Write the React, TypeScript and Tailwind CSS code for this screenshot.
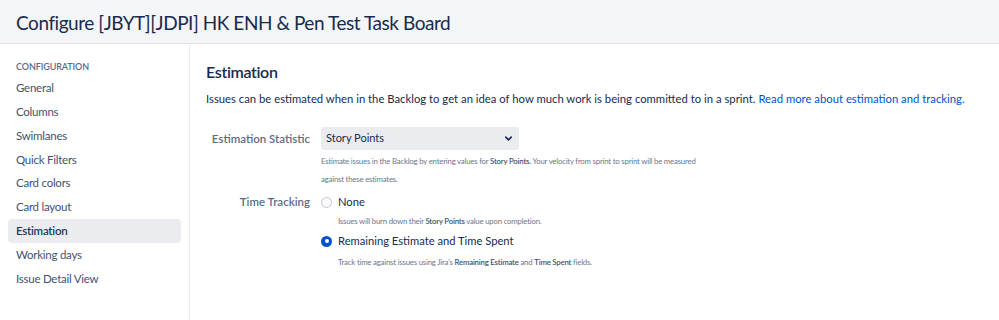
import React from 'react';

const navItems = [
  'General',
  'Columns',
  'Swimlanes',
  'Quick Filters',
  'Card colors',
  'Card layout',
  'Estimation',
  'Working days',
  'Issue Detail View',
];

const font = { fontFamily: 'Lato, "Noto Sans", sans-serif' };

function Radio({ checked }: { checked?: boolean }) {
  return checked ? (
    <span className="flex h-[11px] w-[11px] shrink-0 items-center justify-center rounded-full bg-[#0052cc]">
      <span className="h-[4px] w-[4px] rounded-full bg-white" />
    </span>
  ) : (
    <span className="h-[11px] w-[11px] shrink-0 rounded-full border border-[#c1c7d0] bg-[#fafbfc]" />
  );
}

export default function App() {
  return (
    <div className="h-[320px] w-[999px] overflow-hidden bg-white text-[#172b4d]" style={font}>
      <header className="flex h-[44px] items-center border-b border-[#dfe1e6] bg-[#f4f5f7] px-4">
        <h1 className="whitespace-nowrap pt-[1px] text-[19px] leading-none tracking-[-0.45px] text-[#172b4d]">
          Configure [JBYT][JDPI] HK ENH &amp; Pen Test Task Board
        </h1>
      </header>
      <div className="flex h-[276px]">
        <aside className="w-[190px] shrink-0 border-r border-[#ebecf0] px-2 pt-[16px]">
          <div className="px-2 pb-[2px] text-[9px] font-semibold uppercase leading-[14px] tracking-[-0.1px] text-[#5e6c84]">Configuration</div>
          <nav className="flex flex-col">
            {navItems.map((item) => (
              <a
                key={item}
                className={`flex h-[23.8px] items-center rounded-sm px-2 text-[11.5px] tracking-[-0.25px] ${
                  item === 'Estimation' ? 'bg-[#ebecf0] font-semibold text-[#253858]' : 'text-[#42526e]'
                }`}
              >
                {item}
              </a>
            ))}
          </nav>
        </aside>
        <main className="flex-1 px-4 pt-[17px]">
          <h2 className="text-[16px] font-semibold leading-[22px] tracking-[-0.35px] text-[#172b4d]">Estimation</h2>
          <p className="mt-[7px] whitespace-nowrap text-[11.3px] leading-[18px] text-[#172b4d]">
            Issues can be estimated when in the Backlog to get an idea of how much work is being committed to in a sprint.{' '}
            <a className="text-[#0052cc]">Read more about estimation and tracking.</a>
          </p>
          <div className="mt-[19px] grid grid-cols-[104px_1fr] gap-x-[11px]">
            <div className="flex h-[23px] items-center justify-end whitespace-nowrap text-[11.5px] font-semibold text-[#5e6c84]">
              Estimation Statistic
            </div>
            <div>
              <div className="flex h-[23px] w-[198px] items-center justify-between rounded-[3px] bg-[#ebecf0] pl-[5px] pr-[6px] text-[11px] text-[#172b4d]">
                <span>Story Points</span>
                <svg width="9" height="9" viewBox="0 0 10 10" fill="none">
                  <path d="M2 3.5 5 6.5 8 3.5" stroke="#172b4d" strokeWidth="1.8" strokeLinecap="round" strokeLinejoin="round" />
                </svg>
              </div>
              <p className="mt-[2px] w-[390px] text-[7.8px] leading-[18px] tracking-[-0.2px] text-[#6b778c]">
                Estimate issues in the Backlog by entering values for <b className="font-semibold text-[#42526e]">Story Points.</b> Your velocity from sprint to sprint will be measured against these estimates.
              </p>
            </div>
            <div className="mt-[4px] flex h-[20px] items-center justify-end whitespace-nowrap text-[11.5px] font-semibold text-[#5e6c84]">
              Time Tracking
            </div>
            <div className="mt-[4px]">
              <label className="flex h-[20px] items-center gap-[6px] text-[11.2px] text-[#172b4d]">
                <Radio />
                None
              </label>
              <p className="pl-[17px] text-[7.8px] leading-[18px] tracking-[-0.2px] text-[#6b778c]">
                Issues will burn down their <b className="font-semibold text-[#42526e]">Story Points</b> value upon completion.
              </p>
              <label className="flex h-[22px] items-center gap-[6px] text-[11.2px] text-[#172b4d]">
                <Radio checked />
                Remaining Estimate and Time Spent
              </label>
              <p className="pl-[17px] text-[7.8px] leading-[20px] tracking-[-0.2px] text-[#6b778c]">
                Track time against issues using Jira&apos;s <b className="font-semibold text-[#42526e]">Remaining Estimate</b> and{' '}
                <b className="font-semibold text-[#42526e]">Time Spent</b> fields.
              </p>
            </div>
          </div>
        </main>
      </div>
    </div>
  );
}
